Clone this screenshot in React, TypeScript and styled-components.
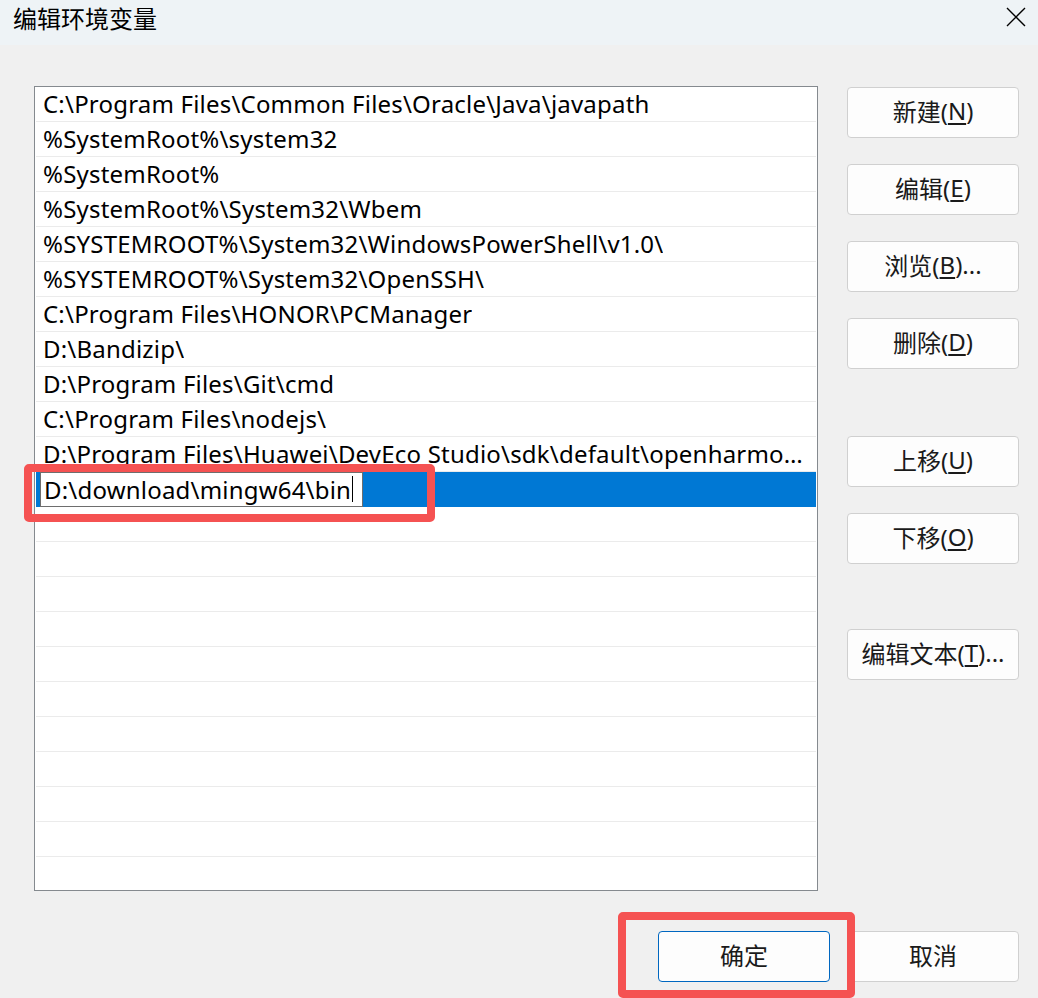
import styled, { createGlobalStyle } from 'styled-components';

const GlobalStyle = createGlobalStyle`
  html, body {
    margin: 0;
    padding: 0;
    background: #f0f0f0;
  }
  body {
    font-family: 'Noto Sans', 'Noto Sans CJK SC', sans-serif;
    color: #000;
  }
`;

const Window = styled.div`
  width: 1038px;
  height: 998px;
  display: flex;
  flex-direction: column;
  background: #f0f0f0;
  overflow: hidden;
`;

const TitleBar = styled.div`
  height: 45px;
  flex-shrink: 0;
  display: flex;
  align-items: center;
  justify-content: space-between;
  padding: 0 12px 0 13px;
  background: #eef3f6;
`;

const Title = styled.div`
  font-family: 'Noto Sans CJK SC', sans-serif;
  font-size: 24px;
  margin-top: -10px;
`;

const CloseButton = styled.div`
  width: 20px;
  height: 20px;
  margin-top: -11px;
  display: flex;
`;

const Body = styled.div`
  display: flex;
  padding: 41px 19px 0 34px;
  gap: 29px;
`;

const ListFrame = styled.div`
  position: relative;
  width: 784px;
  height: 805px;
  flex-shrink: 0;
`;

const ListBox = styled.div`
  width: 100%;
  height: 100%;
  box-sizing: border-box;
  border: 1px solid #858a8f;
  background: #fff;
  padding: 0 1px;
  overflow: hidden;
  display: flex;
  flex-direction: column;
`;

const Row = styled.div<{ selected?: boolean }>`
  position: relative;
  flex-shrink: 0;
  height: 35px;
  box-sizing: border-box;
  border-bottom: 1px solid ${({ selected }) => (selected ? '#0078d4' : '#ebebeb')};
  background: ${({ selected }) => (selected ? '#0078d4' : '#fff')};
  padding: 0 12px 1px 7px;
  display: flex;
  align-items: center;
  font-family: 'Noto Sans', 'Noto Sans CJK SC', sans-serif;
  font-size: 24px;
  letter-spacing: 0.2px;
  white-space: nowrap;
`;

const RowText = styled.span`
  overflow: hidden;
  text-overflow: ellipsis;
`;

const EditBox = styled.div`
  position: absolute;
  left: 4px;
  top: 0;
  width: 323px;
  height: 35px;
  box-sizing: border-box;
  border: 1px solid #6e6e6e;
  background: #fff;
  padding: 0 0 1px 3px;
  display: flex;
  align-items: center;
`;

const Caret = styled.span`
  display: inline-block;
  width: 1px;
  height: 26px;
  margin-left: 1px;
  background: #000;
`;

const Highlight = styled.div`
  position: absolute;
  z-index: 2;
  box-sizing: border-box;
  border: 8px solid #f55252;
  border-radius: 5px;
  pointer-events: none;
`;

const ButtonColumn = styled.div`
  display: flex;
  flex-direction: column;
  padding-top: 1px;
`;

const Button = styled.div<{ gapTop?: number; primary?: boolean }>`
  width: 172px;
  height: 51px;
  box-sizing: border-box;
  margin-top: ${({ gapTop }) => gapTop ?? 0}px;
  border: 1px solid ${({ primary }) => (primary ? '#0067c0' : '#d0d0d0')};
  border-radius: 4px;
  background: #fdfdfd;
  display: flex;
  align-items: center;
  justify-content: center;
  padding-bottom: 4px;
  font-family: 'Noto Sans', 'Noto Sans CJK SC', sans-serif;
  font-size: 24px;
  color: #1a1a1a;
  position: relative;
  white-space: nowrap;

  u {
    text-underline-offset: 3px;
  }
`;

const Footer = styled.div`
  display: flex;
  justify-content: flex-end;
  gap: 17px;
  padding: 40px 19px 0 0;
`;

const paths = [
  'C:\\Program Files\\Common Files\\Oracle\\Java\\javapath',
  '%SystemRoot%\\system32',
  '%SystemRoot%',
  '%SystemRoot%\\System32\\Wbem',
  '%SYSTEMROOT%\\System32\\WindowsPowerShell\\v1.0\\',
  '%SYSTEMROOT%\\System32\\OpenSSH\\',
  'C:\\Program Files\\HONOR\\PCManager',
  'D:\\Bandizip\\',
  'D:\\Program Files\\Git\\cmd',
  'C:\\Program Files\\nodejs\\',
  'D:\\Program Files\\Huawei\\DevEco Studio\\sdk\\default\\openharmony\\toolchains',
];

const TOTAL_ROWS = 23;
const ROW_HEIGHT = 35;

const sideButtons = [
  { label: '新建', key: 'N', gap: 0 },
  { label: '编辑', key: 'E', gap: 26 },
  { label: '浏览', key: 'B', gap: 26, dots: true },
  { label: '删除', key: 'D', gap: 26 },
  { label: '上移', key: 'U', gap: 67 },
  { label: '下移', key: 'O', gap: 26 },
  { label: '编辑文本', key: 'T', gap: 65, dots: true },
];

const CloseIcon = () => (
  <svg width="20" height="20" viewBox="0 0 20 20">
    <path d="M1 1 L19 19 M19 1 L1 19" stroke="#000" strokeWidth="1.4" fill="none" />
  </svg>
);

const App = () => {
  const empty = TOTAL_ROWS - paths.length - 1;
  const selectedTop = 1 + paths.length * ROW_HEIGHT;

  return (
    <Window>
      <GlobalStyle />
      <TitleBar>
        <Title>编辑环境变量</Title>
        <CloseButton>
          <CloseIcon />
        </CloseButton>
      </TitleBar>

      <Body>
        <ListFrame>
          <ListBox>
            {paths.map(p => (
              <Row key={p}>
                <RowText>{p}</RowText>
              </Row>
            ))}
            <Row selected>
              <EditBox>
                D:\download\mingw64\bin
                <Caret />
              </EditBox>
            </Row>
            {Array.from({ length: empty }).map((_, i) => (
              <Row key={`empty-${i}`} />
            ))}
          </ListBox>
          <Highlight style={{ left: -10, top: selectedTop - 8, width: 411, height: 58 }} />
        </ListFrame>

        <ButtonColumn>
          {sideButtons.map(b => (
            <Button key={b.key} gapTop={b.gap}>
              {b.label}(<u>{b.key}</u>){b.dots ? '...' : ''}
            </Button>
          ))}
        </ButtonColumn>
      </Body>

      <Footer>
        <Button primary>
          确定
          <Highlight style={{ left: -41, top: -20, width: 237, height: 86 }} />
        </Button>
        <Button>取消</Button>
      </Footer>
    </Window>
  );
};

export default App;
